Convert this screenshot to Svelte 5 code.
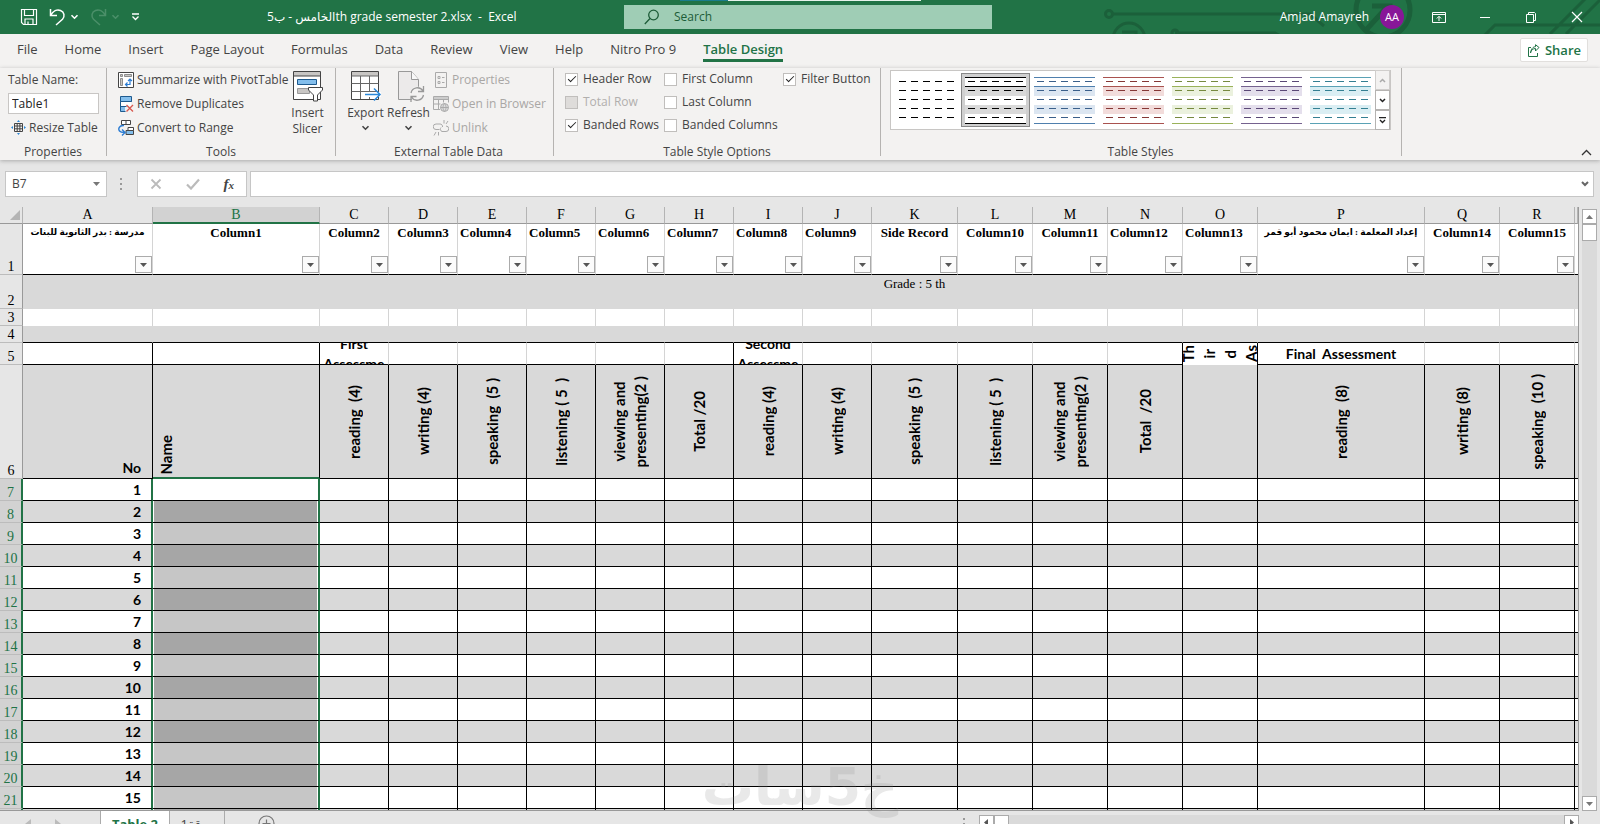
<script>
  const tabs = ['File', 'Home', 'Insert', 'Page Layout', 'Formulas', 'Data', 'Review', 'View', 'Help', 'Nitro Pro 9', 'Table Design']
  let activeTab = $state('Table Design')

  let tableName = $state('Table1')
  let nameBox = $state('B7')
  let formula = $state('')
  let search = $state('')

  let options = $state([
    { id: 'header', label: 'Header Row', checked: true },
    { id: 'total', label: 'Total Row', checked: false, disabled: true },
    { id: 'bandrows', label: 'Banded Rows', checked: true },
    { id: 'firstcol', label: 'First Column', checked: false },
    { id: 'lastcol', label: 'Last Column', checked: false },
    { id: 'bandcols', label: 'Banded Columns', checked: false },
    { id: 'filter', label: 'Filter Button', checked: true }
  ])

  // dash colour, rule colour, band colour
  const styles = [
    { dash: '#000', rule: 'none', band: 'none' },
    { dash: '#000', rule: '#000', band: '#d9d9d9' },
    { dash: '#3a5f8a', rule: '#4f7fad', band: '#dce6f1' },
    { dash: '#853735', rule: '#a9524f', band: '#f2dcdb' },
    { dash: '#76893f', rule: '#9ab25a', band: '#ebf1de' },
    { dash: '#5a4876', rule: '#75628f', band: '#e4dfec' },
    { dash: '#347f92', rule: '#5aa2b5', band: '#daeef3' }
  ]
  let selectedStyle = $state(1)

  const columns = [
    { id: 'A', width: 130, head: 'مدرسة : بدر الثانوية للبنات', rtl: true },
    { id: 'B', width: 167, head: 'Column1', row6: 'Name' },
    { id: 'C', width: 69, head: 'Column2', row5: 'First\nAssessme', row6: 'reading  (4)' },
    { id: 'D', width: 69, head: 'Column3', row6: 'writing (4)' },
    { id: 'E', width: 69, head: 'Column4', left: true, row6: 'speaking  (5 )' },
    { id: 'F', width: 69, head: 'Column5', left: true, row6: 'listening ( 5  )' },
    { id: 'G', width: 69, head: 'Column6', left: true, row6: 'viewing and\npresenting(2 )' },
    { id: 'H', width: 69, head: 'Column7', left: true, row6: 'Total /20' },
    { id: 'I', width: 69, head: 'Column8', left: true, row5: 'Second\nAssessme', row6: 'reading (4)' },
    { id: 'J', width: 69, head: 'Column9', left: true, row6: 'writing (4)' },
    { id: 'K', width: 86, head: 'Side Record', row6: 'speaking  (5 )' },
    { id: 'L', width: 75, head: 'Column10', row6: 'listening ( 5  )' },
    { id: 'M', width: 75, head: 'Column11', row6: 'viewing and\npresenting(2 )' },
    { id: 'N', width: 75, head: 'Column12', left: true, row6: 'Total  /20' },
    { id: 'O', width: 75, head: 'Column13', left: true, row6: '' },
    { id: 'P', width: 167, head: 'إعداد المعلمة : ايمان محمود أبو قمر', rtl: true, row5: 'Final  Assessment', row6: 'reading  (8)' },
    { id: 'Q', width: 75, head: 'Column14', row6: 'writing (8)' },
    { id: 'R', width: 75, head: 'Column15', row6: 'speaking  (10 )' }
  ]

  // columns whose right edge is ruled in black on row 5
  const ruled = ['A', 'B', 'H', 'N', 'O']
  const students = Array.from({ length: 15 }, (_, i) => i + 1)
</script>

{#snippet caret()}
  <svg class="caret" width="9" height="6" viewBox="0 0 9 6"><path d="M1.5 1.2 4.5 4.2 7.5 1.2" fill="none" stroke="currentColor" stroke-width="1.6" /></svg>
{/snippet}

<div class="app">
  <header class="titlebar">
    <svg class="circuit" width="500" height="34" viewBox="0 0 500 34" fill="none" stroke="#1b603a" stroke-width="3">
      <circle cx="9" cy="14" r="3.5" />
      <path d="M13 14h197l14 12M75 33h100l14 8M380 40l15-15h105M450 34 486 -2M466 34 502 -2" />
      <circle cx="29" cy="39" r="16" />
      <path d="M22 32h14v8" />
      <circle cx="75" cy="33" r="3" />
      <circle cx="283" cy="10" r="27" stroke-width="5" />
      <path d="M272 6h18v14M288 6l-22 24" stroke-width="5" />
    </svg>
    <div class="progress"><i></i></div>

    <div class="quick">
      <button aria-label="Save">
        <svg width="18" height="18" viewBox="0 0 18 18" fill="none" stroke="#fff" stroke-width="1.2"><path d="M1.5 1.5h15v15h-13l-2-2zM4.500 1.500v6h9v-6M5 16.500v-5.500h8v5.500M8 13.500v3" /></svg>
      </button>
      <button class="undo" aria-label="Undo">
        <svg width="17" height="18" viewBox="0 0 17 18" fill="none" stroke="#fff" stroke-width="1.500"><path d="M1.500 1v6.500h6.500M1.800 7.200C4 3 8 1.200 11.500 2.500c4 1.600 4.500 6 2 8.700L7 17" /></svg>
        {@render caret()}
      </button>
      <button class="redo" aria-label="Redo">
        <svg width="17" height="18" viewBox="0 0 17 18" fill="none" stroke="currentColor" stroke-width="1.500"><path d="M15.500 1v6.500H9M15.200 7.200C13 3 9 1.200 5.500 2.500c-4 1.600-4.500 6-2 8.700L10 17" /></svg>
        {@render caret()}
      </button>
      <button aria-label="Customize Quick Access Toolbar">
        <svg width="9" height="8" viewBox="0 0 9 8" fill="none" stroke="#fff" stroke-width="1.300"><path d="M1 1h7M1.500 3.500l3 3 3-3" /></svg>
      </button>
    </div>
    <h1>الخامس - ب5th grade semester 2.xlsx&nbsp; -&nbsp; Excel</h1>

    <label class="search">
      <svg width="16" height="16" viewBox="0 0 16 16" fill="none" stroke="#1d5c38" stroke-width="1.300"><circle cx="9.500" cy="6" r="4.800" /><path d="M6 9.500.8 15" /></svg>
      <input type="text" placeholder="Search" aria-label="Search" bind:value={search} />
    </label>

    <div class="account">
      <span>Amjad Amayreh</span>
      <button class="avatar">AA</button>
    </div>
    <div class="window">
      <button aria-label="Ribbon Display Options">
        <svg width="14" height="12" viewBox="0 0 14 12" fill="none" stroke="#fff"><path d="M.5 1.500h13v10H.5zM.5 3.500h13M7 10V5.500M4.800 7.500 7 5.300l2.200 2.200" /></svg>
      </button>
      <button aria-label="Minimize">
        <svg width="12" height="12" viewBox="0 0 12 12" stroke="#fff"><path d="M1 6.500h10" /></svg>
      </button>
      <button aria-label="Restore">
        <svg width="12" height="12" viewBox="0 0 12 12" fill="none" stroke="#fff"><path d="M1.500 3.500h7v8h-7zM3.500 3V1.500h6l1 1v7H9" /></svg>
      </button>
      <button aria-label="Close">
        <svg width="12" height="12" viewBox="0 0 12 12" stroke="#fff" stroke-width="1.200"><path d="M1 1l10 10M11 1 1 11" /></svg>
      </button>
    </div>
  </header>

  <nav class="tabs">
    {#each tabs as tab}
      <button class:active={tab === activeTab} onclick={() => (activeTab = tab)}>{tab}</button>
    {/each}
    <button class="share">
      <svg width="13" height="13" viewBox="0 0 13 13" fill="none" stroke="#217346"><path d="M4 3.500H1.500v9h9V9M3.500 9c.5-3 2.500-4.500 5-4.500V7L12 3.500 8.500.7v2C6 2.700 4 5 3.500 9z" /></svg>
      Share
    </button>
  </nav>

  <section class="ribbon">
    <div class="group properties">
      <div class="body stack">
        <label for="table-name">Table Name:</label>
        <input id="table-name" type="text" bind:value={tableName} />
        <button class="small">
          <svg width="15" height="15" viewBox="0 0 15 15" fill="none" stroke="#444"><path d="M3.500 3.500h8v8h-8zM3.500 6h8M3.500 8.800h8M6.200 4v7.500M8.900 4v7.500" /><path d="M7.500 0 9 2H6zM7.500 15 6 13h3zM0 7.500 2 6v3zM15 7.500 13 9V6z" fill="#2b88d8" stroke="none" /></svg>
          Resize Table
        </button>
      </div>
      <h2>Properties</h2>
    </div>

    <div class="group tools">
      <div class="body">
        <div class="stack">
          <button class="small">
            <svg width="16" height="16" viewBox="0 0 16 16" fill="none" stroke="#444"><path d="M.5.5h15v15H.5z" fill="#fff" /><path d="M2.500 2.500h2v2h-2zM6.500 2.500h7v2h-7zM2.500 6.500h2v7h-2z" fill="#c8c6c4" stroke="#777" stroke-width=".8" /><path d="M8 12.500h4v-5M9.500 10.500l-2 2 2 2M10 9l2-2 2 2" stroke="#2b7cd3" stroke-width="1.200" /></svg>
            Summarize with PivotTable
          </button>
          <button class="small">
            <svg width="16" height="16" viewBox="0 0 16 16" fill="none"><path d="M2.500.5h11v5h-11zM2.500 5.500h11M2.500 10.500h6M2.500 5.500v10h5" fill="#83beec" stroke="#1e5a8e" /><path d="M3 6h10v4H3z" fill="#fff" /><path d="M3 11h4v4H3z" fill="#83beec" /><path d="M8.500 9l6.500 6.500M15 9l-6.500 6.500" stroke="#d8574e" stroke-width="1.300" /></svg>
            Remove Duplicates
          </button>
          <button class="small">
            <svg width="16" height="16" viewBox="0 0 16 16" fill="none"><path d="M3.500.5h9v4h-9zM8 .5v4" fill="#fff" stroke="#444" /><path d="M8 10.500h7.500v4H8z" fill="#83beec" stroke="#444" /><path d="M10 7.500h5.500v3H10z" fill="#fff" stroke="#444" /><path d="M6 5.500C1 5 0 9 1.500 11c1 1.300 3 1.500 5 1.500M4 9.500l3 3-3 3" stroke="#2b7cd3" stroke-width="1.400" /></svg>
            Convert to Range
          </button>
        </div>
        <button class="large">
          <svg width="32" height="32" viewBox="0 0 32 32" fill="none"><path d="M1.500 1.500h27v28h-27z" fill="#fff" stroke="#444" /><path d="M2 2h26v4H2z" fill="#c8c6c4" /><path d="M1.500 6h27" stroke="#444" /><path d="M5.500 9.500h19v5h-19z" fill="#83beec" stroke="#1e5a8e" /><path d="M5.500 18.500h12v5h-12z" fill="#c8c6c4" stroke="#999" /><path d="M16.500 17.500h14v2.500l-5 5v6h-4v-6l-5-5z" fill="#fff" stroke="#444" /></svg>
          <span>Insert<br />Slicer</span>
        </button>
      </div>
      <h2>Tools</h2>
    </div>

    <div class="group external">
      <div class="body">
        <button class="large">
          <svg width="32" height="32" viewBox="0 0 32 32" fill="none"><path d="M1.500 1.500h27v28h-27z" fill="#fff" stroke="#444" /><path d="M2 2h26v4H2z" fill="#c8c6c4" /><path d="M1.500 6h27M1.500 13.500h27M1.500 21.500h27M10.500 6v23M19.500 6v23" stroke="#666" /><path d="M14 22h17v5H14z" fill="#fff" /><path d="M15 24.500h15M24 18.500l6 6-6 6" stroke="#2b88d8" stroke-width="1.500" /></svg>
          <span>Export</span>
          {@render caret()}
        </button>
        <button class="large">
          <svg width="32" height="32" viewBox="0 0 32 32" fill="none" stroke="#999"><path d="M5.500 1.500h13l7 8v20h-20z" fill="#eceaea" /><path d="M18.500 1.500v8h7" fill="#f8f8f8" /><circle cx="24" cy="24" r="7.500" fill="#f3f2f1" stroke="none" /><path d="M18 23a6.500 6.500 0 0 1 12-2M30.500 25a6.500 6.500 0 0 1-12 2M30.500 16v5.500H25M18 32v-5.500h5.500" stroke-width="1.300" /></svg>
          <span>Refresh</span>
          {@render caret()}
        </button>
        <div class="stack">
          <button class="small" disabled>
            <svg width="16" height="16" viewBox="0 0 16 16" fill="none" stroke="#aaa"><path d="M2.500.5h11v15h-11z" /><path d="M5 4.500h2v2H5zM5 9.500h2v2H5zM9 5.500h2.500M9 10.500h2.500" /></svg>
            Properties
          </button>
          <button class="small" disabled>
            <svg width="16" height="16" viewBox="0 0 16 16" fill="none" stroke="#aaa"><path d="M7 13.500H.5V.5h15v6M.5 3.500h15M.5 8h7M5.500 3.500v10M10.500 3.500v3" /><path d="M1 1h14v2H1z" fill="#ccc" stroke="none" /><circle cx="11.500" cy="11.500" r="4" fill="#ddd" /><path d="M7.500 11.500h8M11.500 7.500c-2 2.500-2 5.500 0 8M11.500 7.500c2 2.500 2 5.500 0 8" /></svg>
            Open in Browser
          </button>
          <button class="small" disabled>
            <svg width="16" height="16" viewBox="0 0 16 16" fill="none" stroke="#aaa"><path d="M6.500 9.500H3a2.500 2.500 0 0 1 0-5.500h4a2.500 2.500 0 0 1 2.500 3M8 7.500a2.500 2.500 0 0 0 1 4h4a2.500 2.500 0 0 0 0-5.500M11 3.500V0M13 4l2-3M3 12l-2 3.500M5.500 12v3.500" /></svg>
            Unlink
          </button>
        </div>
      </div>
      <h2>External Table Data</h2>
    </div>

    <div class="group options">
      <div class="body checks">
        {#each options as option (option.id)}
          <label class:disabled={option.disabled}>
            <input type="checkbox" bind:checked={option.checked} disabled={option.disabled} />
            {option.label}
          </label>
        {/each}
      </div>
      <h2>Table Style Options</h2>
    </div>

    <div class="group gallery">
      <div class="body">
        <div class="swatches">
          {#each styles as style, i}
            <button class:selected={i === selectedStyle} aria-label="Table style {i + 1}" onclick={() => (selectedStyle = i)}>
              <svg width="61" height="47" viewBox="0 0 61 47" stroke-width="1">
                <path d="M0 0h61v47H0z" fill="#fff" />
                <path d="M0 10h61v9H0zM0 28h61v9H0z" fill={style.band} />
                <path d="M0 .5h61M0 9.500h61M0 46.500h61" stroke={style.rule} />
                <path d="M3 4.500h56M3 13.500h56M3 22.500h56M3 31.500h56M3 40.500h56" stroke={style.dash} stroke-dasharray="7 5" />
              </svg>
            </button>
          {/each}
          <div class="scroller">
            <button disabled aria-label="Row up"><svg width="7" height="5" viewBox="0 0 7 5" fill="none" stroke="#aaa" stroke-width="1.500"><path d="M1 4l2.500-2.500L6 4" /></svg></button>
            <button aria-label="Row down"><svg width="7" height="5" viewBox="0 0 7 5" fill="none" stroke="#222" stroke-width="1.500"><path d="M1 1l2.500 2.500L6 1" /></svg></button>
            <button aria-label="More styles"><svg width="7" height="7" viewBox="0 0 7 7" fill="none" stroke="#222" stroke-width="1.300"><path d="M0 .7h7M1 3l2.500 2.500L6 3" /></svg></button>
          </div>
        </div>
      </div>
      <h2>Table Styles</h2>
    </div>
    <button class="collapse" aria-label="Collapse the Ribbon">
      <svg width="11" height="7" viewBox="0 0 11 7" fill="none" stroke="#333" stroke-width="1.300"><path d="M1 6l4.500-4.500L10 6" /></svg>
    </button>
  </section>

  <section class="formulabar">
    <div class="namebox">
      <input type="text" aria-label="Name Box" bind:value={nameBox} />
      <svg width="7" height="4" viewBox="0 0 7 4"><path d="M0 0h7L3.500 4z" fill="#777" /></svg>
    </div>
    <svg class="grip" width="2" height="12" viewBox="0 0 2 12" fill="#999"><path d="M0 0h2v2H0zM0 5h2v2H0zM0 10h2v2H0z" /></svg>
    <div class="fx">
      <button disabled aria-label="Cancel"><svg width="12" height="12" viewBox="0 0 12 12" stroke="#bbb" stroke-width="1.800"><path d="M1.500 1.500l9 9M10.500 1.500l-9 9" /></svg></button>
      <button disabled aria-label="Enter"><svg width="14" height="12" viewBox="0 0 14 12" fill="none" stroke="#bbb" stroke-width="2.200"><path d="M1 6.500l4 4L13 1.500" /></svg></button>
      <button aria-label="Insert Function"><i>f<sub>x</sub></i></button>
    </div>
    <div class="formula">
      <input type="text" aria-label="Formula" bind:value={formula} />
      <svg width="8" height="6" viewBox="0 0 8 6" fill="none" stroke="#666" stroke-width="2"><path d="M1 1l3 3 3-3" /></svg>
    </div>
  </section>

  <main class="workbook">
    <div class="sheet">
      <table>
        <colgroup>
          <col style:width="23px" />
          {#each columns as col}
            <col style:width="{col.width}px" />
          {/each}
          <col />
        </colgroup>
        <thead>
          <tr>
            <th class="corner"><svg width="10" height="10" viewBox="0 0 10 10"><path d="M10 0v10H0z" fill="#b4b4b4" /></svg></th>
            {#each columns as col}
              <th class:picked={col.id === 'B'}>{col.id}</th>
            {/each}
            <th></th>
          </tr>
        </thead>
        <tbody>
          <tr class="r1">
            <th>1</th>
            {#each columns as col}
              <td>
                <div class="cell" class:left={col.left} class:rtl={col.rtl}>
                  <b dir={col.rtl ? 'rtl' : 'ltr'}>{col.head}</b>
                  <button class="filter" aria-label="Filter {col.head}"><svg width="7" height="4" viewBox="0 0 7 4"><path d="M0 0h7L3.500 4z" fill="#555" /></svg></button>
                </div>
              </td>
            {/each}
            <td></td>
          </tr>
          <tr class="r2">
            <th>2</th>
            {#each columns as col}
              <td>{#if col.id === 'K'}<div class="cell">Grade : 5 th</div>{/if}</td>
            {/each}
            <td></td>
          </tr>
          <tr class="r3">
            <th>3</th>
            {#each columns as _}<td></td>{/each}
            <td></td>
          </tr>
          <tr class="r4">
            <th>4</th>
            {#each columns as _}<td></td>{/each}
            <td></td>
          </tr>
          <tr class="r5">
            <th>5</th>
            {#each columns as col}
              <td class:ruled={ruled.includes(col.id)} class:open={col.id === 'O'}>
                {#if col.id === 'O'}
                  <div class="cell"><span class="turned">Th</span><span class="turned">ir</span><span class="turned">d</span><span class="turned">As</span></div>
                {:else if col.row5}
                  <div class="cell">{col.row5}</div>
                {/if}
              </td>
            {/each}
            <td></td>
          </tr>
          <tr class="r6">
            <th>6</th>
            {#each columns as col}
              <td class:no={col.id === 'A'} class:name={col.id === 'B'}>
                {#if col.id === 'A'}
                  <div class="cell">No</div>
                {:else}
                  <div class="cell"><span class="turned">{col.row6}</span></div>
                {/if}
              </td>
            {/each}
            <td></td>
          </tr>
          {#each students as n}
            <tr class="student">
              <th>{n + 6}</th>
              {#each columns as col}
                <td class:number={col.id === 'A'} class:range={col.id === 'B'} class:cursor={col.id === 'B' && n === 1}>{col.id === 'A' ? n : ''}</td>
              {/each}
              <td></td>
            </tr>
          {/each}
          <tr class="student">
            <th></th>
            {#each columns as col}
              <td class:number={col.id === 'A'} class:range={col.id === 'B'}></td>
            {/each}
            <td></td>
          </tr>
        </tbody>
      </table>
    </div>
    <div class="vscroll">
      <button aria-label="Scroll up"><svg width="7" height="4" viewBox="0 0 7 4"><path d="M0 4h7L3.500 0z" fill="#777" /></svg></button>
      <div class="track"><div class="thumb"></div></div>
      <button aria-label="Scroll down"><svg width="7" height="4" viewBox="0 0 7 4"><path d="M0 0h7L3.500 4z" fill="#777" /></svg></button>
    </div>
    <div class="watermark" dir="rtl">خ5سات</div>
  </main>

  <footer class="bottom">
    <div class="arrows">
      <svg width="6" height="10" viewBox="0 0 6 10"><path d="M6 0v10L0 5z" fill="#bbb" /></svg>
      <svg width="6" height="10" viewBox="0 0 6 10"><path d="M0 0v10l6-5z" fill="#bbb" /></svg>
    </div>
    <button class="sheet-tab current">Table 2</button>
    <button class="sheet-tab" dir="rtl">ورقة1</button>
    <button class="add" aria-label="New sheet">
      <svg width="17" height="17" viewBox="0 0 17 17" fill="none" stroke="#777" stroke-width="1.200"><circle cx="8.500" cy="8.500" r="7.500" /><path d="M8.500 4.500v8M4.500 8.500h8" /></svg>
    </button>
    <svg class="grip" width="2" height="12" viewBox="0 0 2 12" fill="#999"><path d="M0 0h2v2H0zM0 5h2v2H0zM0 10h2v2H0z" /></svg>
    <div class="hscroll">
      <button aria-label="Scroll left"><svg width="4" height="7" viewBox="0 0 4 7"><path d="M4 0v7L0 3.500z" fill="#555" /></svg></button>
      <div class="track"><div class="thumb"></div></div>
      <button aria-label="Scroll right"><svg width="4" height="7" viewBox="0 0 4 7"><path d="M0 0v7l4-3.500z" fill="#555" /></svg></button>
    </div>
  </footer>
</div>

<style>
  :global(body) { margin: 0; overflow: hidden; }
  .app {
    display: flex; flex-direction: column;
    height: calc(100vh + 12px);
    font: 12px/16px "Open Sans", "DejaVu Sans", sans-serif;
    color: #444; background: #e6e6e6;
  }
  .app *, .app *::before { box-sizing: border-box; }
  button { font: inherit; color: inherit; padding: 0; border: 0; background: none; }
  input { font: inherit; color: inherit; outline: none; }
  svg { display: block; flex: none; }

  /* title bar */
  .titlebar {
    position: relative; flex: none; display: flex; align-items: center;
    height: 34px; padding-left: 20px; background: #217346; color: #fff; overflow: hidden;
  }
  .circuit { position: absolute; right: 0; top: 0; }
  .progress { position: absolute; left: 680px; top: 0; width: 241px; height: 1px; background: #e8f3ec; }
  .progress i { display: block; width: 48px; height: 1px; background: #1a7d8c; }
  .quick { display: flex; align-items: center; width: 247px; gap: 11px; }
  .quick button { display: flex; align-items: center; gap: 4px; }
  .redo { color: #4b8f69; }
  h1 { flex: none; width: 357px; margin: 0; font: inherit; white-space: nowrap; }
  .search {
    display: flex; align-items: center; gap: 14px; width: 368px; height: 24px;
    padding-left: 20px; background: #9fcdb5;
  }
  .search input { flex: 1; min-width: 0; padding: 0; border: 0; background: none; color: #1d5c38; }
  .search input::placeholder { color: #1d5c38; opacity: 1; }
  .account { position: relative; display: flex; align-items: center; gap: 11px; margin-left: auto; }
  .avatar { width: 24px; height: 24px; border-radius: 50%; background: #881798; font-size: 11px; }
  .window { position: relative; display: flex; padding-left: 12px; }
  .window button { display: flex; align-items: center; justify-content: center; width: 46px; height: 34px; }

  /* ribbon tabs */
  .tabs { flex: none; display: flex; align-items: center; gap: 27px; height: 34px; padding: 0 12px 2px 17px; background: #f3f2f1; font-size: 13px; white-space: nowrap; }
  .tabs button { height: 24px; border-bottom: 3px solid transparent; }
  .tabs .active { color: #217346; font-weight: 600; border-color: #217346; }
  .tabs .share {
    display: flex; align-items: center; gap: 5px; height: 24px; margin-left: auto; padding: 0 6px;
    border: 1px solid #e1dfdd; border-radius: 2px; background: #fff; color: #217346; font-weight: 600;
  }

  /* ribbon groups */
  .ribbon { position: relative; flex: none; display: flex; height: 92px; background: #f3f2f1; box-shadow: 0 1px 4px #aaa; white-space: nowrap; }
  .group { display: flex; flex-direction: column; height: 88px; border-right: 1px solid #b5b3b1; }
  .body { display: flex; flex: 1; }
  h2 { margin: 0 0 -4px; font-size: 12px; line-height: 16px; font-weight: 400; text-align: center; }
  .stack { display: flex; flex-direction: column; gap: 3px; padding-top: 1px; }
  .small { display: flex; align-items: center; gap: 3px; height: 21px; }
  .small:disabled { color: #a9a7a5; }
  .properties { width: 107px; }
  .properties .stack { padding: 1px 8px 0; }
  .properties label { height: 21px; line-height: 21px; }
  .properties input { width: 91px; height: 21px; padding: 0 3px; border: 1px solid #c8c6c4; background: #fff; color: #222; }
  .properties .small { padding-left: 3px; }
  .tools { width: 229px; }
  .tools .stack { flex: none; width: 179px; padding-left: 11px; }
  .large { flex: none; display: flex; flex-direction: column; align-items: center; width: 43px; padding-top: 2px; }
  .large span { padding-top: 3px; }
  .large .caret { margin-top: 4px; }
  .external { width: 218px; padding-left: 8px; }
  .external .stack { padding-left: 3px; }
  .options { width: 327px; }
  .checks { display: grid; grid-template: repeat(3, 23px) / 99px 119px auto; grid-auto-flow: column; justify-content: start; padding: 1px 0 0 11px; }
  .checks label { display: flex; align-items: center; gap: 5px; height: 20px; }
  .checks .disabled { color: #b1afad; }
  .checks input { appearance: none; flex: none; display: grid; place-items: center; width: 13px; height: 13px; margin: 0; border: 1px solid #c0bebc; background: #fff; }
  .checks input:disabled { background: #dedcda; }
  .checks input:checked::before { content: ""; width: 8px; height: 4px; margin-bottom: 2px; border: solid #222; border-width: 0 0 1px 1px; transform: rotate(-45deg); }
  .gallery { width: 521px; padding: 0 10px 0 9px; }
  .gallery .body { padding-top: 2px; }
  .swatches { display: flex; align-items: center; height: 60px; padding-left: 1px; border: 1px solid #c8c6c4; background: #fff; }
  .swatches > button { display: grid; place-items: center; width: 69px; height: 54px; }
  .swatches > .selected { border: 1px solid #888; background: #d0d0d0; }
  .scroller { display: flex; flex-direction: column; width: 15px; height: 60px; }
  .scroller button { flex: 1; display: grid; place-items: center; border: 1px solid #b5b3b1; background: #fff; }
  .scroller button:disabled { background: #f3f2f1; border-color: #d0cecc; }
  .collapse { align-self: flex-end; margin-left: auto; padding: 0 8px 4px; }

  /* formula bar */
  .formulabar { flex: none; display: flex; align-items: center; padding: 11px 6px 10px 5px; }
  .namebox, .fx, .formula { display: flex; align-items: center; height: 26px; border: 1px solid #c6c6c6; background: #fff; }
  .namebox { width: 102px; padding-right: 6px; }
  .namebox input, .formula input { flex: 1; min-width: 0; padding: 0 6px; border: 0; background: none; }
  .formulabar .grip { margin: 0 15px 0 13px; }
  .fx { width: 110px; justify-content: space-around; }
  .fx i { font: italic bold 15px/16px "Liberation Serif", serif; }
  .fx sub { font-size: 11px; line-height: 0; vertical-align: baseline; }
  .formula { flex: 1; margin-left: 3px; padding-right: 4px; }

  /* sheet */
  .workbook { position: relative; flex: 1; min-height: 0; display: flex; }
  .sheet { flex: 1; min-width: 0; overflow: hidden; border-right: 1px solid #999; border-bottom: 1px solid #999; }
  table { width: 100%; table-layout: fixed; border-spacing: 0; background: #fff; color: #000; }
  th, td { padding: 0; overflow: hidden; white-space: pre; }
  thead th { height: 17px; border-right: 1px solid #b4b4b4; border-bottom: 1px solid #999; background: #e6e6e6; font: 14px/16px "Liberation Serif", serif; }
  .corner svg { margin-left: 10px; }
  thead .picked { background: #d2d2d2; border-bottom: 2px solid #217346; color: #217346; line-height: 15px; }
  tbody th { border-right: 1px solid #999; border-bottom: 1px solid #bcbcbc; background: #e6e6e6; font: 14px/15px "Liberation Serif", serif; vertical-align: bottom; }
  td { border-right: 1px solid #d4d4d4; border-bottom: 1px solid #000; font: bold 14px/20px Lato, sans-serif; }
  td:last-child { border-right: 0; }
  .cell { display: flex; align-items: center; justify-content: center; text-align: center; overflow: hidden; }
  .turned { flex: none; writing-mode: vertical-rl; transform: rotate(180deg); font-size: 15px; line-height: 21px; }

  .r1 td, .r1 th { height: 51px; }
  .r1 .cell { flex-direction: column; justify-content: space-between; height: 50px; padding-bottom: 1px; font: 13px/17px "Liberation Serif", "DejaVu Sans", serif; }
  .r1 .left b { align-self: flex-start; padding-left: 2px; }
  .r1 .rtl b { font-size: 9px; }
  .filter { align-self: flex-end; display: grid; place-items: center; width: 17px; height: 17px; border: 1px solid #ababab; background: #fbfbfb; }
  .r2 td, .r2 th { height: 34px; }
  .r2 td, .r4 td { background: #d9d9d9; border-right-color: #d9d9d9; }
  .r2 td { border-bottom: 0; vertical-align: top; }
  .r2 .cell { font: 13px/18px "Liberation Serif", serif; }
  .r3 td, .r3 th, .r4 td, .r4 th { height: 17px; }
  .r3 td { border-bottom: 0; }
  .r5 td, .r5 th { height: 22px; }
  .r5 .cell { height: 21px; }
  .r5 .ruled { border-right-color: #000; }
  .r5 .open { border-bottom: 0; }
  .r6 td, .r6 th { height: 114px; }
  .r6 td, .student td { border-right-color: #000; }
  .r6 td { background: #d9d9d9; }
  .r6 .cell { height: 113px; }
  .r6 .no .cell { align-items: flex-end; justify-content: flex-end; padding-right: 11px; }
  .r6 .name { border-bottom: 2px solid #217346; }
  .r6 .name .cell { height: 112px; align-items: flex-end; justify-content: flex-start; padding: 0 0 2px 3px; }

  .student td, .student th { height: 22px; }
  .student th { background: #d2d2d2; border-right: 2px solid #217346; color: #217346; }
  .student:nth-child(even) td { background: #d9d9d9; }
  .student .number { padding-right: 10px; text-align: right; border-right: 2px solid #217346; }
  .student td.range { background: #c6c6c6; border-right: 2px solid #217346; box-shadow: inset 1px 0 #fff, inset -1px 0 #fff; }
  .student:nth-child(even) td.range { background: #a6a6a6; }
  .student td.cursor { background: #fff; }

  .vscroll { flex: none; display: flex; flex-direction: column; width: 21px; padding: 2px 3px 0; }
  .vscroll button, .hscroll button { flex: none; display: grid; place-items: center; width: 15px; height: 15px; border: 1px solid #ababab; background: #fff; }
  .track { flex: 1; display: flex; background: #dadada; }
  .thumb { width: 15px; height: 17px; border: 1px solid #ababab; background: #fff; }

  .watermark {
    position: absolute; left: 50%; bottom: 0; transform: translateX(-50%);
    font: bold 52px/48px "DejaVu Sans", sans-serif; color: #888; opacity: .18;
  }

  /* sheet tabs */
  .bottom { flex: none; display: flex; align-items: center; height: 25px; padding-right: 21px; }
  .arrows { display: flex; gap: 24px; width: 100px; padding-left: 25px; }
  .sheet-tab { width: 55px; height: 25px; border-right: 1px solid #ababab; font-size: 13px; }
  .bottom .current { width: 70px; border-left: 1px solid #ababab; background: #fff; color: #217346; font-weight: 700; }
  .add { margin-left: 33px; }
  .bottom .grip { margin-left: auto; }
  .hscroll { display: flex; width: 38%; margin-left: 14px; }
</style>
